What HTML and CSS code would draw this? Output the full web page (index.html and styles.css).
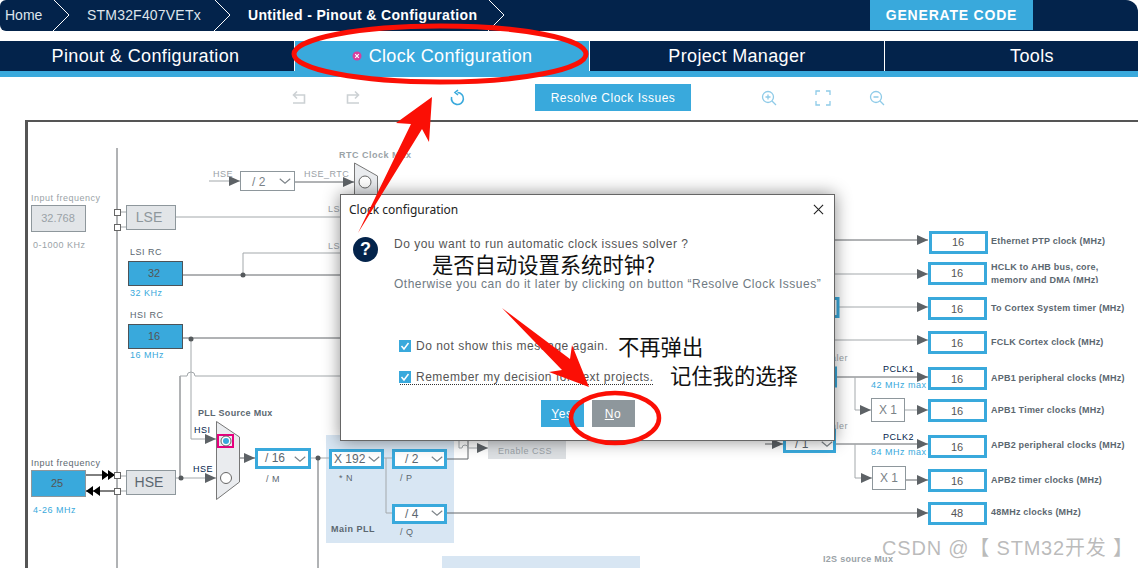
FILE: index.html
```html
<!DOCTYPE html>
<html lang="en">
<head>
  <meta charset="UTF-8">
  <title>Clock Configuration</title>
  <link rel="stylesheet" href="styles.css">
</head>
<body>
  <header class="crumbs">
    <span class="crumb crumb-home">Home</span>
    <svg class="crumb-sep" viewBox="0 0 16 31"><polyline points="0,-1 16,15 0,31"/></svg>
    <span class="crumb crumb-chip">STM32F407VETx</span>
    <svg class="crumb-sep" viewBox="0 0 16 31"><polyline points="0,-1 16,15 0,31"/></svg>
    <span class="crumb crumb-current">Untitled - Pinout &amp; Configuration</span>
    <svg class="crumb-sep" viewBox="0 0 16 31"><polyline points="0,-1 16,15 0,31"/></svg>
    <button class="generate">GENERATE CODE</button>
  </header>

  <nav class="tabs">
    <div class="tab tab-first">Pinout &amp; Configuration</div>
    <div class="tab active">
      <svg class="tab-icon" viewBox="0 0 10 10"><circle cx="5" cy="5" r="4.5"/><path d="M3.2 3.2l3.6 3.6M6.8 3.2l-3.6 3.6"/></svg>
      Clock Configuration
    </div>
    <div class="tab">Project Manager</div>
    <div class="tab">Tools</div>
  </nav>

  <div class="toolbar">
    <svg class="tool off" viewBox="0 0 16 16"><path d="M6 1.5L2.5 5 6 8.5M3 5h10.5v8H2"/></svg>
    <svg class="tool off" viewBox="0 0 16 16"><path d="M10 1.5L13.5 5 10 8.5M13 5H2.5v8H14"/></svg>
    <svg class="tool on refresh" viewBox="0 0 16 16"><path d="M8.5 2.5A6 6 0 1 1 2.6 7M9 0L6 2.5 9 5"/></svg>
    <button class="resolve">Resolve Clock Issues</button>
    <svg class="tool soft zoom-group" viewBox="0 0 16 16"><circle cx="7" cy="7" r="5.5"/><path d="M7 4.5v5M4.5 7h5M11 11l4 4"/></svg>
    <svg class="tool soft" viewBox="0 0 16 16"><path d="M1 5V1h4M11 1h4v4M15 11v4h-4M5 15H1v-4"/></svg>
    <svg class="tool soft" viewBox="0 0 16 16"><circle cx="7" cy="7" r="5.5"/><path d="M4.5 7h5M11 11l4 4"/></svg>
  </div>

  <main class="diagram">
    <svg class="clock-tree" viewBox="28 122 1110 446" width="1110" height="446">
      <defs>
        <marker id="head" markerUnits="userSpaceOnUse" markerWidth="11" markerHeight="10" refX="11" refY="5" orient="auto">
          <path class="head" d="M0 0L11 5 0 10z"/>
        </marker>
        <clipPath id="hclk-clip"><rect x="985" y="260" width="140" height="23"/></clipPath>
        <symbol id="chevron" viewBox="0 0 16 8" overflow="visible"><polyline points="1,1 8,7 15,1"/></symbol>
      </defs>

      <!-- pll areas -->
      <rect class="pll-bg" x="326" y="435" width="128" height="108"/>
      <rect class="pll-bg" x="442" y="556" width="198" height="12"/>

      <!-- wires -->
      <g class="wire">
        <path d="M117 148V568"/>
        <path d="M243 275H345"/>
        <path d="M183 275H243"/>
        <path d="M183 338H345"/>
        <path d="M318 458V568"/>
        <path d="M447 459H468V438"/>
        <path d="M447 513H928" marker-end="url(#head)"/>
        <path d="M830 240H928" marker-end="url(#head)"/>
        <path d="M836 377H928" marker-end="url(#head)"/>
        <path d="M836 444H928" marker-end="url(#head)"/>
        <path d="M905 480H928" marker-end="url(#head)"/>
        <path d="M295 182H354" marker-end="url(#head)"/>
        <path d="M180 376V478"/>
        <path d="M240 458H255" marker-end="url(#head)"/>
        <path d="M765 444H783" marker-end="url(#head)"/>
      </g>
      <g class="wire light">
        <path d="M209 181H240" marker-end="url(#head)"/>
        <path d="M176 217H345"/>
        <path d="M243 275V253H345"/>
        <path d="M191 338V439H216" marker-end="url(#head)"/>
        <path d="M180 376H187A4 4 0 0 1 195 376H345"/>
        <path d="M176 478H216" marker-end="url(#head)"/>
        <path d="M310 458H329"/>
        <path d="M384 458H392M386 458V513H392"/>
        <path d="M459 438V448H462A3 3 0 0 1 468 448H488" marker-end="url(#head)"/>
        <path d="M830 274H928" marker-end="url(#head)"/>
        <path d="M838 307H928" marker-end="url(#head)"/>
        <path d="M830 340H928" marker-end="url(#head)"/>
        <path d="M855 377V410H871" marker-end="url(#head)"/>
        <path d="M904 410H928" marker-end="url(#head)"/>
        <path d="M855 444V478H872" marker-end="url(#head)"/>
        <path d="M120 212H126M120 227H126M120 476H126M120 491H126"/>
      </g>
      <path class="wire-black" d="M86 475H114M86 491H114"/>
      <path class="solid" d="M102 470l7 5-7 5zM108 470l7 5-7 5zM100 486l-7 5 7 5zM93 486l-7 5 7 5z"/>

      <g class="dots">
        <circle cx="243" cy="275" r="2.5"/>
        <circle cx="191" cy="339" r="2.5"/>
        <circle cx="181" cy="478" r="2.5"/>
        <circle cx="318" cy="458" r="2.5"/>
      </g>
      <g class="port">
        <rect x="114.5" y="209.5" width="6" height="6"/>
        <rect x="114.5" y="224.5" width="6" height="6"/>
        <rect x="114.5" y="472.5" width="6" height="6"/>
        <rect x="114.5" y="488.5" width="6" height="6"/>
      </g>

      <!-- sources -->
      <text class="lbl off" x="31" y="201">Input frequency</text>
      <rect class="src off" x="31.5" y="205.5" width="54" height="26"/>
      <text class="val off" x="58" y="222">32.768</text>
      <text class="lbl off" x="33" y="248">0-1000 KHz</text>

      <rect class="src off" x="126.5" y="205.5" width="49" height="24"/>
      <text class="big off" x="149" y="222">LSE</text>
      <text class="lbl off" x="328" y="212">LSE</text>
      <text class="lbl off" x="328" y="249">LSI</text>

      <text class="lbl" x="130" y="255">LSI RC</text>
      <rect class="src on" x="128.5" y="261.5" width="54" height="24"/>
      <text class="val" x="154" y="277">32</text>
      <text class="lbl blue" x="130" y="296">32 KHz</text>

      <text class="lbl" x="130" y="318">HSI RC</text>
      <rect class="src on" x="128.5" y="324.5" width="54" height="24"/>
      <text class="val" x="154" y="340">16</text>
      <text class="lbl blue" x="130" y="358">16 MHz</text>

      <text class="lbl" x="31" y="466">Input frequency</text>
      <rect class="src ext" x="31.5" y="470.5" width="54" height="26"/>
      <text class="val" x="57" y="487">25</text>
      <text class="lbl blue" x="33" y="513">4-26 MHz</text>

      <rect class="src off" x="126.5" y="470.5" width="49" height="24"/>
      <text class="big" x="149" y="487">HSE</text>

      <!-- muxes -->
      <text class="lbl off bold" x="339" y="158">RTC Clock Mux</text>
      <polygon class="mux" points="354.5,163 377.5,176 377.5,205 354.5,205"/>
      <circle class="radio" cx="365" cy="182" r="6"/>
      <text class="lbl off" x="213" y="177">HSE</text>
      <text class="lbl off" x="304" y="177">HSE_RTC</text>
      <rect class="sel plain" x="240.5" y="171.5" width="54" height="19"/>
      <text class="sel-text off" x="252" y="186">/ 2</text>
      <use class="chev" href="#chevron" x="279" y="178" width="12" height="6"/>

      <text class="lbl bold tight" x="198" y="416">PLL  Source Mux</text>
      <text class="lbl navy" x="194" y="433">HSI</text>
      <text class="lbl navy" x="193" y="472">HSE</text>
      <polygon class="mux" points="216.5,421.5 239.5,437 239.5,482 216.5,499.5"/>
      <rect class="pick" x="218" y="435" width="15" height="12"/>
      <circle class="radio" cx="226" cy="441" r="5"/>
      <circle class="radio-dot" cx="226" cy="441" r="3"/>
      <circle class="radio" cx="226" cy="478" r="5.5"/>

      <!-- pll -->
      <rect class="sel" x="256.5" y="449.5" width="53" height="18"/>
      <text class="sel-text" x="265" y="462">/ 16</text>
      <use class="chev" href="#chevron" x="294" y="456" width="12" height="6"/>
      <text class="lbl" x="266" y="482">/ M</text>

      <rect class="sel" x="330.5" y="450.5" width="52" height="17"/>
      <text class="sel-text" x="334" y="463">X 192</text>
      <use class="chev" href="#chevron" x="368" y="456" width="12" height="6"/>
      <text class="lbl" x="339" y="481">* N</text>

      <rect class="sel" x="393.5" y="450.5" width="52" height="17"/>
      <text class="sel-text" x="405" y="463">/ 2</text>
      <use class="chev" href="#chevron" x="431" y="456" width="12" height="6"/>
      <text class="lbl" x="400" y="481">/ P</text>

      <rect class="sel" x="393.5" y="505.5" width="52" height="17"/>
      <text class="sel-text" x="405" y="518">/ 4</text>
      <use class="chev" href="#chevron" x="431" y="510" width="12" height="6"/>
      <text class="lbl" x="400" y="535">/ Q</text>
      <text class="lbl bold" x="331" y="532">Main PLL</text>

      <rect class="css-btn" x="488" y="438" width="78" height="21"/>
      <text class="lbl off" x="498" y="454">Enable CSS</text>

      <!-- prescalers under the dialog -->
      <rect class="sel" x="784.5" y="430.5" width="50" height="21"/>
      <text class="sel-text" x="795" y="448">/ 1</text>
      <use class="chev" href="#chevron" x="821" y="441" width="12" height="6"/>
      <rect class="sel" x="800" y="298.5" width="38" height="18"/>
      <rect class="sel" x="800" y="368" width="35.5" height="18"/>
      <text class="lbl off" x="848" y="429" text-anchor="end">Prescaler</text>
      <text class="lbl off" x="848" y="361" text-anchor="end">Prescaler</text>

      <!-- output clocks -->
      <rect class="out" x="930.5" y="232.5" width="56" height="20"/>
      <text class="val" x="958" y="246">16</text>
      <text class="out-lbl" x="991" y="244">Ethernet PTP clock (MHz)</text>

      <rect class="out" x="929.5" y="263.5" width="56" height="20"/>
      <text class="val" x="957" y="277">16</text>
      <g clip-path="url(#hclk-clip)">
        <text class="out-lbl" x="991" y="270">HCLK to AHB bus, core,</text>
        <text class="out-lbl" x="991" y="283">memory and DMA (MHz)</text>
      </g>

      <rect class="out" x="929.5" y="298.5" width="56" height="20"/>
      <text class="val" x="957" y="313">16</text>
      <text class="out-lbl" x="991" y="311">To Cortex System timer (MHz)</text>

      <rect class="out" x="929.5" y="332.5" width="56" height="20"/>
      <text class="val" x="957" y="347">16</text>
      <text class="out-lbl" x="991" y="345">FCLK Cortex clock (MHz)</text>

      <rect class="out" x="929.5" y="368.5" width="56" height="20"/>
      <text class="val" x="957" y="383">16</text>
      <text class="out-lbl" x="991" y="381">APB1 peripheral clocks (MHz)</text>
      <text class="lbl navy" x="883" y="372">PCLK1</text>
      <text class="lbl blue" x="871" y="388">42 MHz max</text>

      <rect class="box-x" x="871.5" y="398.5" width="33" height="23"/>
      <text class="sel-text off" x="879" y="414">X 1</text>
      <rect class="out" x="929.5" y="400.5" width="56" height="20"/>
      <text class="val" x="957" y="415">16</text>
      <text class="out-lbl" x="991" y="413">APB1 Timer clocks (MHz)</text>

      <rect class="out" x="929.5" y="436.5" width="56" height="20"/>
      <text class="val" x="957" y="451">16</text>
      <text class="out-lbl" x="991" y="448">APB2 peripheral clocks (MHz)</text>
      <text class="lbl navy" x="883" y="440">PCLK2</text>
      <text class="lbl blue" x="871" y="455">84 MHz max</text>

      <rect class="box-x" x="872.5" y="466.5" width="33" height="23"/>
      <text class="sel-text off" x="880" y="482">X 1</text>
      <rect class="out" x="929.5" y="470.5" width="56" height="20"/>
      <text class="val" x="957" y="485">16</text>
      <text class="out-lbl" x="991" y="483">APB2 timer clocks (MHz)</text>

      <rect class="out" x="929.5" y="503.5" width="56" height="20"/>
      <text class="val" x="957" y="517">48</text>
      <text class="out-lbl" x="991" y="515">48MHz clocks (MHz)</text>

      <text class="lbl off bold tight" x="823" y="562">I2S source Mux</text>
    </svg>
  </main>

  <section class="dialog">
    <div class="dialog-title">
      <span>Clock configuration</span>
      <svg class="dialog-close" viewBox="0 0 12 12"><path d="M1 1l10 10M11 1L1 11"/></svg>
    </div>
    <div class="dialog-body">
      <div class="question">?</div>
      <div class="message">
        <p>Do you want to run automatic clock issues solver ?</p>
        <p class="message-hint">Otherwise you can do it later by clicking on button “Resolve Clock Issues”</p>
      </div>
    </div>
    <div class="options">
      <label class="option">
        <svg class="check" viewBox="0 0 12 12"><rect width="12" height="12"/><path d="M2.5 6l2.5 3 4.5-6"/></svg>
        Do not show this message again.
      </label>
      <label class="option focused">
        <svg class="check" viewBox="0 0 12 12"><rect width="12" height="12"/><path d="M2.5 6l2.5 3 4.5-6"/></svg>
        Remember my decision for next projects.
      </label>
    </div>
    <div class="dialog-buttons">
      <button class="btn yes"><u>Y</u>es</button>
      <button class="btn no"><u>N</u>o</button>
    </div>
  </section>

  <!-- red marks drawn on the screenshot -->
  <svg class="marks" viewBox="0 0 1138 568" width="1138" height="568">
    <ellipse class="ring" cx="440" cy="54" rx="146" ry="28"/>
    <polygon class="arrow" points="432,97 429,142 422,129 358,233 411,124 396,123"/>
    <polygon class="arrow" points="502,308 570,359 572,345 589,387 549,372 562,370"/>
    <ellipse class="ring thin" cx="615" cy="418" rx="44" ry="25"/>
    <text class="note" x="432" y="273">是否自动设置系统时钟?</text>
    <text class="note" x="618" y="355">不再弹出</text>
    <text class="note" x="670" y="384">记住我的选择</text>
    <text class="watermark" x="882" y="555">CSDN @【 STM32开发 】</text>
  </svg>
</body>
</html>
```

FILE: styles.css
```css
html, body {
  margin: 0;
  height: 568px;
  overflow: hidden;
}
body {
  position: relative;
  background-color: #fff;
  font-family: "Liberation Sans", Arial, sans-serif;
  color: #5b6770;
}
button {
  font-family: inherit;
  border: 0;
  cursor: pointer;
}

/* Breadcrumb bar */
.crumbs {
  display: flex;
  height: 31px;
  padding-left: 5px;
  box-sizing: border-box;
  background-color: #03234b;
  border-radius: 6px 12px 0 6px;
  color: #dfe5ec;
  font-size: 14px;
}
.crumb {
  box-sizing: border-box;
  padding-left: 18px;
  line-height: 31px;
  white-space: nowrap;
}
.crumb-home {
  width: 48px;
  padding-left: 0;
}
.crumb-chip {
  width: 145px;
  letter-spacing: 0.2px;
}
.crumb-current {
  width: 258px;
  color: #fff;
  font-weight: bold;
  letter-spacing: 0.35px;
}
.crumb-sep {
  flex: none;
  width: 16px;
  height: 31px;
  overflow: visible;
}
.crumb-sep polyline {
  fill: none;
  stroke: #fff;
  stroke-width: 1;
}
.generate {
  width: 163px;
  height: 30px;
  margin-left: auto;
  margin-right: 105px;
  background-color: #39a9dc;
  color: #fff;
  font-size: 14px;
  font-weight: bold;
  letter-spacing: 0.8px;
}

/* Main tabs */
.tabs {
  display: grid;
  grid-template-columns: repeat(4, 295px);
  height: 30px;
  margin-top: 10px;
  border-bottom: 6px solid #39a9dc;
  background-color: #03234b;
}
.tab {
  display: flex;
  align-items: center;
  justify-content: center;
  gap: 7px;
  border-right: 1px solid #fff;
  color: #fff;
  font-size: 18px;
  letter-spacing: 0.35px;
}
.tab-first {
  padding-right: 3px;
}
.tab.active {
  background-color: #39a9dc;
}
.tab-icon {
  width: 10px;
  height: 10px;
}
.tab-icon circle {
  fill: #d63f9e;
}
.tab-icon path {
  fill: none;
  stroke: #fff;
  stroke-width: 1.2;
}

/* Toolbar */
.toolbar {
  display: flex;
  align-items: center;
  gap: 38px;
  height: 27px;
  padding: 7px 0 9px 291px;
}
.tool {
  flex: none;
  width: 16px;
  height: 16px;
  fill: none;
  stroke-width: 1.6;
  overflow: visible;
}
.tool.off {
  stroke: #ccd1d4;
}
.tool.on {
  stroke: #39a9dc;
}
.tool.soft {
  stroke: #8fcbe8;
  stroke-width: 1.3;
}
.refresh {
  margin-left: 50px;
}
.resolve {
  flex: none;
  width: 156px;
  height: 27px;
  margin-left: 32px;
  background-color: #39a9dc;
  color: #fff;
  font-size: 12px;
  letter-spacing: 0.5px;
}
.zoom-group {
  margin-left: 32px;
}

/* Clock tree */
.diagram {
  height: 446px;
  margin-left: 25px;
  border-top: 2px solid #555;
  border-left: 3px solid #555;
}
.clock-tree {
  display: block;
  font-family: "Liberation Sans", Arial, sans-serif;
}
.pll-bg {
  fill: #d8e6f3;
}
.wire path {
  fill: none;
  stroke: #62676b;
  stroke-width: 1;
}
.wire.light path {
  stroke: #a3a8ab;
}
.wire-black {
  fill: none;
  stroke: #000;
  stroke-width: 1;
}
.solid {
  fill: #000;
}
.head {
  fill: #5d6266;
}
.dots circle {
  fill: #55595c;
}
.port rect {
  fill: #fff;
  stroke: #666;
}
.lbl {
  fill: #5b6770;
  font-size: 9px;
  letter-spacing: 0.5px;
}
.lbl.off {
  fill: #9aa2a7;
}
.lbl.blue {
  fill: #39a9dc;
}
.lbl.navy {
  fill: #03234b;
}
.lbl.bold {
  font-weight: bold;
}
.lbl.tight {
  letter-spacing: 0.3px;
}
.src {
  stroke-width: 1;
}
.src.off {
  fill: #e2e5e8;
  stroke: #8e979c;
}
.src.on {
  fill: #39a9dc;
  stroke: #4d5358;
}
.src.ext {
  fill: #39a9dc;
  stroke: #8e979c;
}
.val {
  fill: #555;
  font-size: 11px;
  text-anchor: middle;
}
.val.off {
  fill: #9aa2a7;
}
.big {
  fill: #5b6770;
  font-size: 14px;
  text-anchor: middle;
}
.big.off {
  fill: #8e979c;
}
.mux {
  fill: #eaecef;
  stroke: #777;
}
.radio {
  fill: #fff;
  stroke: #666;
}
.radio-dot {
  fill: #39a9dc;
}
.pick {
  fill: none;
  stroke: #e6007e;
  stroke-width: 2;
}
.sel {
  fill: #fff;
  stroke: #39a9dc;
  stroke-width: 3;
}
.sel.plain {
  stroke: #8e979c;
  stroke-width: 1;
}
.sel-text {
  fill: #5b6770;
  font-size: 12px;
}
.sel-text.off {
  fill: #7a8287;
}
.chev {
  fill: none;
  stroke: #7c8388;
  stroke-width: 1.5;
}
.css-btn {
  fill: #dde0e3;
}
.box-x {
  fill: #fff;
  stroke: #8e979c;
}
.out {
  fill: #fff;
  stroke: #39a9dc;
  stroke-width: 3;
}
.out-lbl {
  fill: #5b6770;
  font-size: 9px;
  font-weight: bold;
  letter-spacing: 0.22px;
}

/* Dialog */
.dialog {
  position: absolute;
  left: 340px;
  top: 194px;
  display: flex;
  flex-direction: column;
  width: 495px;
  height: 247px;
  box-sizing: border-box;
  border: 1px solid #666;
  background-color: #fff;
  box-shadow: 0 0 16px rgba(0, 0, 0, 0.45);
  font-size: 12px;
}
.dialog-title {
  display: flex;
  align-items: center;
  justify-content: space-between;
  height: 29px;
  padding: 0 10px 0 8px;
  color: #222;
  font-family: "Noto Sans", sans-serif;
  font-size: 12px;
}
.dialog-close {
  width: 11px;
  height: 11px;
  fill: none;
  stroke: #222;
  stroke-width: 1.2;
}
.dialog-body {
  display: flex;
  padding: 13px 0 0 12px;
}
.question {
  flex: none;
  width: 25px;
  height: 25px;
  border-radius: 50%;
  background-color: #03234b;
  color: #fff;
  font-size: 18px;
  font-weight: bold;
  line-height: 25px;
  text-align: center;
}
.message {
  margin-left: 16px;
  letter-spacing: 0.5px;
  color: #555;
}
.message p {
  margin: 0;
  line-height: 14px;
}
.message .message-hint {
  margin-top: 26px;
  color: #6f7a82;
}
.options {
  display: flex;
  flex-direction: column;
  align-items: flex-start;
  gap: 15px;
  margin-top: 47px;
  padding-left: 58px;
  color: #555;
  letter-spacing: 0.5px;
}
.option {
  display: flex;
  align-items: center;
  gap: 5px;
  height: 16px;
}
.focused {
  background-image: linear-gradient(to right, #333 50%, transparent 50%);
  background-repeat: repeat-x;
  background-size: 2px 1px;
  background-position: 17px 100%;
}
.check {
  flex: none;
  width: 12px;
  height: 12px;
}
.check rect {
  fill: #39a9dc;
}
.check path {
  fill: none;
  stroke: #fff;
  stroke-width: 1.5;
}
.dialog-buttons {
  display: flex;
  justify-content: center;
  gap: 8px;
  margin-top: 15px;
}
.btn {
  width: 43px;
  height: 27px;
  color: #fff;
  font-size: 12px;
  letter-spacing: 0.6px;
}
.btn.yes {
  background-color: #39a9dc;
}
.btn.no {
  background-color: #8e979c;
}

/* Marks on top of the screenshot */
.marks {
  position: absolute;
  left: 0;
  top: 0;
  pointer-events: none;
}
.ring {
  fill: none;
  stroke: #fb0f05;
  stroke-width: 5;
}
.ring.thin {
  stroke-width: 4.5;
}
.arrow {
  fill: #fb0f05;
}
.note {
  fill: #111;
  font-family: "Noto Sans CJK SC", sans-serif;
  font-size: 21.3px;
}
.watermark {
  fill: rgba(120, 120, 120, 0.5);
  font-family: "Liberation Sans", "Noto Sans CJK SC", sans-serif;
  font-size: 20px;
  letter-spacing: 0.8px;
}
```
